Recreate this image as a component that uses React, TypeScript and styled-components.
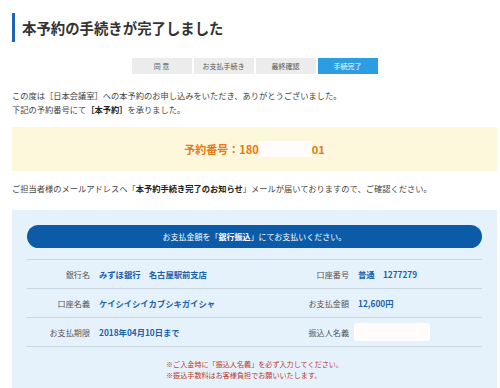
import React from "react";
import styled, { createGlobalStyle } from "styled-components";

const GlobalStyle = createGlobalStyle`
  body {
    margin: 0;
    background: #fff;
    font-family: "Noto Sans CJK JP", "Noto Sans", sans-serif;
    color: #444;
  }
`;

const Page = styled.div`
  width: 485px;
  padding-left: 12px;
  overflow: hidden;
  height: 388px;
`;

const Title = styled.h1`
  margin: 13px 0 0;
  height: 29px;
  line-height: 29px;
  border-left: 3px solid #1e64b4;
  padding-left: 7px;
  font-size: 14.4px;
  font-weight: bold;
  color: #333;
`;

const Steps = styled.div`
  display: flex;
  justify-content: center;
  gap: 2px;
  margin-top: 16px;
`;

const Step = styled.div<{ $active?: boolean }>`
  width: 60px;
  height: 16px;
  line-height: 16px;
  text-align: center;
  font-size: 7px;
  background: ${(p) => (p.$active ? "#2b9de0" : "#ececec")};
  color: ${(p) => (p.$active ? "#fff" : "#555")};
`;

const Text = styled.p<{ $mt: number }>`
  margin: ${(p) => p.$mt}px 0 0;
  font-size: 8.25px;
  line-height: 13.5px;
  color: #444;
  white-space: nowrap;

  b {
    color: #222;
  }
`;

const NumberBox = styled.div`
  margin-top: 11px;
  height: 44px;
  background: #fdf7dc;
  display: flex;
  align-items: center;
  justify-content: center;
  font-size: 11px;
  font-weight: bold;
  color: #e47a18;
`;

// blanked-out part of the screenshot
const Masked = styled.span<{ $w: number; $h: number }>`
  display: inline-block;
  width: ${(p) => p.$w}px;
  height: ${(p) => p.$h}px;
  background: #fffcfb;
`;

const Panel = styled.div`
  margin-top: 15px;
  background: #e5f2fc;
  padding: 15px 15px 20px;
`;

const Pill = styled.div`
  height: 23px;
  line-height: 23px;
  border-radius: 12px;
  background: #0b5ba8;
  color: #fff;
  text-align: center;
  font-size: 8px;
`;

const Table = styled.div`
  margin-top: 11px;
  border-top: 1px solid #c9d5df;
  display: grid;
  grid-template-columns: 68px 159px 100px 128px;
`;

const Label = styled.div`
  height: 28px;
  border-bottom: 1px solid #c9d5df;
  display: flex;
  align-items: center;
  justify-content: flex-end;
  padding-right: 5px;
  font-size: 8.1px;
  color: #555;
`;

const Value = styled.div<{ $flush?: boolean }>`
  height: 28px;
  border-bottom: 1px solid #c9d5df;
  display: flex;
  align-items: center;
  padding-left: ${(p) => (p.$flush ? 0 : 4)}px;
  font-size: 8.3px;
  font-weight: bold;
  color: #1b61ac;
  white-space: nowrap;
`;

const Notes = styled.div`
  margin-top: 12px;
  display: flex;
  justify-content: center;
`;

const NoteList = styled.div`
  font-size: 7.1px;
  line-height: 11px;
  color: #c0392b;
  white-space: nowrap;
`;

export default function App() {
  return (
    <Page>
      <GlobalStyle />
      <Title>本予約の手続きが完了しました</Title>

      <Steps>
        <Step>同 意</Step>
        <Step>お支払手続き</Step>
        <Step>最終確認</Step>
        <Step $active>手続完了</Step>
      </Steps>

      <Text $mt={15}>
        この度は［日本会議室］への本予約のお申し込みをいただき、ありがとうございました。
        <br />
        下記の予約番号にて<b>［本予約］</b>を承りました。
      </Text>

      <NumberBox>
        予約番号：180<Masked $w={53} $h={16} />01
      </NumberBox>

      <Text $mt={10.5}>
        ご担当者様のメールアドレスへ「<b>本予約手続き完了のお知らせ</b>」メールが届いておりますので、ご確認ください。
      </Text>

      <Panel>
        <Pill>
          お支払金額を「<b>銀行振込</b>」にてお支払いください。
        </Pill>

        <Table>
          <Label>銀行名</Label>
          <Value>みずほ銀行　名古屋駅前支店</Value>
          <Label>口座番号</Label>
          <Value>普通　1277279</Value>

          <Label>口座名義</Label>
          <Value>ケイシイシイカブシキガイシャ</Value>
          <Label>お支払金額</Label>
          <Value>12,600円</Value>

          <Label>お支払期限</Label>
          <Value>2018年04月10日まで</Value>
          <Label>振込人名義</Label>
          <Value $flush>
            <Masked $w={76} $h={18} />
          </Value>
        </Table>

        <Notes>
          <NoteList>
            ※ご入金時に「振込人名義」を必ず入力してください。
            <br />
            ※振込手数料はお客様負担でお願いいたします。
          </NoteList>
        </Notes>
      </Panel>
    </Page>
  );
}
